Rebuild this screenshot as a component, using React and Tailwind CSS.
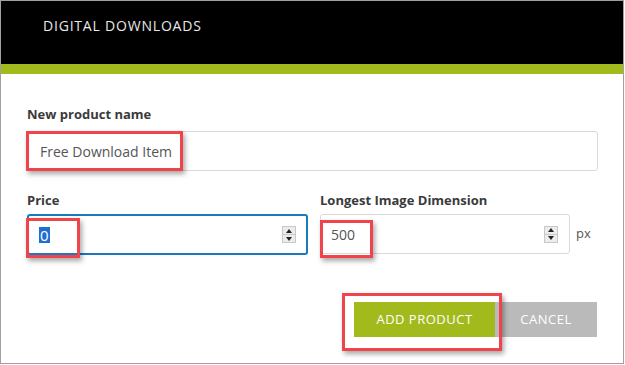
import React from "react";

function Spinner() {
  return (
    <div className="flex flex-col w-[14px] h-[17px] border border-[#c8c8c8] bg-[#ececec]">
      <div className="flex-1 flex items-center justify-center border-b border-[#c8c8c8]">
        <div className="w-0 h-0 border-l-[3px] border-r-[3px] border-b-[4px] border-l-transparent border-r-transparent border-b-[#222]" />
      </div>
      <div className="flex-1 flex items-center justify-center">
        <div className="w-0 h-0 border-l-[3px] border-r-[3px] border-t-[4px] border-l-transparent border-r-transparent border-t-[#222]" />
      </div>
    </div>
  );
}

export default function App() {
  const font = { fontFamily: '"Open Sans", "Noto Sans", sans-serif' };
  return (
    <div
      className="relative w-[624px] h-[364px] border border-[#a0a0a0] bg-white flex flex-col"
      style={font}
    >
      <div className="h-[63px] bg-black flex items-start pl-[42px] pt-[14px]">
        <span className="text-[14px] tracking-[0.8px] text-[#e8e8e8]">DIGITAL DOWNLOADS</span>
      </div>
      <div className="h-[10px] bg-[#a2ba1c]" />
      <div className="flex flex-col px-[26px] pt-[31px]">
        <label className="text-[13px] font-bold text-[#3a3a3a] leading-[18px]">New product name</label>
        <div className="mt-[8px] h-[40px] w-[571px] border border-[#dadada] rounded-[3px] flex items-center pl-[12px]">
          <span className="text-[14px] text-[#555]">Free Download Item</span>
        </div>
        <div className="flex mt-[20px]">
          <div className="flex flex-col w-[281px]">
            <label className="text-[13px] font-bold text-[#3a3a3a] leading-[18px]">Price</label>
            <div className="mt-[5px] h-[41px] w-[281px] border-2 border-[#1b79be] rounded-[3px] flex items-center pl-[10px] pr-[10px]">
              <span className="text-[15px] text-white bg-[#1e6fd0] leading-[16px] px-[1px]">0</span>
              <div className="ml-auto">
                <Spinner />
              </div>
            </div>
          </div>
          <div className="flex flex-col ml-[12px]">
            <label className="text-[13px] font-bold text-[#3a3a3a] leading-[18px]">Longest Image Dimension</label>
            <div className="mt-[5px] flex items-center">
              <div className="h-[40px] w-[250px] border border-[#dadada] rounded-[3px] flex items-center pl-[10px] pr-[11px]">
                <span className="text-[14px] text-[#555]">500</span>
                <div className="ml-auto">
                  <Spinner />
                </div>
              </div>
              <span className="ml-[6px] text-[13px] text-[#555]">px</span>
            </div>
          </div>
        </div>
        <div className="flex justify-end mt-[47px]">
          <button className="h-[35px] w-[141px] bg-[#a2ba1c] text-white text-[13px] tracking-[0.5px]">ADD PRODUCT</button>
          <button className="h-[35px] w-[102px] bg-[#bababa] text-white text-[13px] tracking-[0.5px]">CANCEL</button>
        </div>
      </div>

      <div className="absolute left-[25px] top-[130px] w-[157px] h-[40px] border-[3px] border-[#ef4449] shadow-[2px_3px_5px_rgba(0,0,0,0.35)]" />
      <div className="absolute left-[25px] top-[217px] w-[54px] h-[40px] border-[3px] border-[#ef4449] shadow-[2px_3px_5px_rgba(0,0,0,0.35)]" />
      <div className="absolute left-[319px] top-[219px] w-[53px] h-[38px] border-[3px] border-[#ef4449] shadow-[2px_3px_5px_rgba(0,0,0,0.35)]" />
      <div className="absolute left-[341px] top-[292px] w-[160px] h-[58px] border-[3px] border-[#ef4449] shadow-[2px_3px_5px_rgba(0,0,0,0.35)]" />
    </div>
  );
}
